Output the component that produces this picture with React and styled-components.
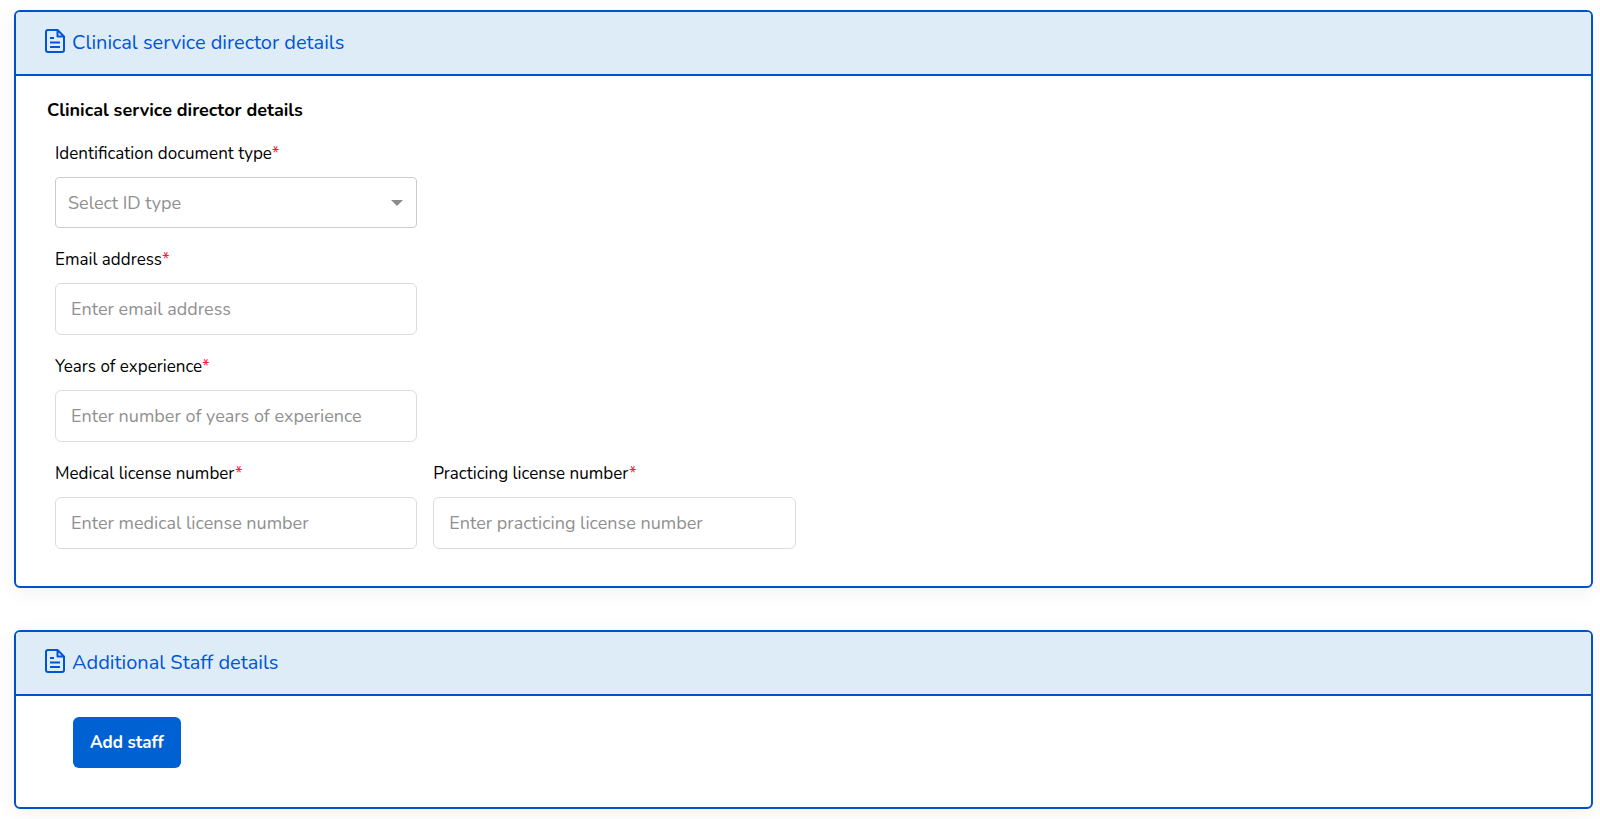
import styled, { createGlobalStyle } from "styled-components";

const GlobalStyle = createGlobalStyle`
  * {
    box-sizing: border-box;
  }

  body {
    margin: 0;
    background: #fff;
    color: #000;
    font-family: Nunito, Lato, sans-serif;
    font-size: 18px;
  }
`;

const Page = styled.main`
  display: flex;
  flex-direction: column;
  gap: 42px;
  padding: 10px 7px 10px 14px;
`;

const Card = styled.section`
  overflow: hidden;
  border: 2px solid #0052cc;
  border-radius: 6px;
  background: #fff;
  box-shadow: 0 4px 20px rgba(0, 0, 0, 0.06);
`;

const CardHeader = styled.header`
  display: flex;
  align-items: center;
  gap: 7px;
  height: 64px;
  padding: 0 29px;
  border-bottom: 2px solid #0052cc;
  background: #deecf8;
  color: #0055d4;
`;

const CardTitle = styled.h2`
  margin: 0;
  font-size: 20px;
  font-weight: 400;
  line-height: 24px;
`;

const DocumentSvg = styled.svg`
  width: 20px;
  height: 24px;
  margin-bottom: 4px;
`;

const CardBody = styled.div`
  padding: 22px 31px 37px;
`;

const StaffBody = styled.div`
  padding: 21px 57px 39px;
`;

const FormTitle = styled.h3`
  margin: 0 0 20px;
  font-size: 18px;
  font-weight: 700;
  line-height: 24px;
`;

const FormRow = styled.div`
  display: flex;
  margin-bottom: 20px;

  &:last-child {
    margin-bottom: 0;
  }
`;

const Field = styled.div`
  display: flex;
  flex: 0 0 25%;
  flex-direction: column;
  gap: 11px;
  min-width: 0;
  padding: 0 8px;
`;

const Label = styled.label`
  font-size: 17px;
  line-height: 24px;
`;

const Required = styled.span`
  color: #ff1a3c;
`;

const Input = styled.input`
  width: 100%;
  height: 52px;
  padding: 0 15px;
  border: 1px solid #d9dce1;
  border-radius: 6px;
  background: #fff;
  font: inherit;

  &::placeholder {
    color: #909090;
    opacity: 1;
  }
`;

const SelectWrap = styled.div`
  position: relative;
`;

const Select = styled.select`
  width: 100%;
  height: 51px;
  padding: 0 36px 0 12px;
  border: 1px solid #cccccc;
  border-radius: 4px;
  appearance: none;
  background: #fff;
  color: #909090;
  font: inherit;
`;

const Arrow = styled.svg`
  position: absolute;
  top: 23px;
  right: 14px;
  width: 12px;
  height: 6px;
  pointer-events: none;
`;

const AddButton = styled.button`
  height: 51px;
  padding: 0 17px;
  border: 0;
  border-radius: 6px;
  background: #0062d2;
  color: #fff;
  font: inherit;
  font-size: 17px;
  font-weight: 700;
  cursor: pointer;
`;

const DocumentIcon = () => (
  <DocumentSvg viewBox="0 0 20 24" fill="none" aria-hidden="true">
    <path
      d="M12.5 1H3a2 2 0 0 0-2 2v18a2 2 0 0 0 2 2h14a2 2 0 0 0 2-2V7.5zM12.5 1v6.5H19"
      stroke="currentColor"
      strokeWidth="2"
      strokeLinejoin="round"
    />
    <path
      d="M5 9h4M5 13.5h10M5 18h10"
      stroke="currentColor"
      strokeWidth="2"
    />
  </DocumentSvg>
);

const FieldLabel = ({ id, children }) => (
  <Label htmlFor={id}>
    {children}
    <Required>*</Required>
  </Label>
);

const TextField = ({ id, label, placeholder, type = "text" }) => (
  <Field>
    <FieldLabel id={id}>{label}</FieldLabel>
    <Input id={id} type={type} placeholder={placeholder} />
  </Field>
);

const App = () => {
  return (
    <>
      <GlobalStyle />
      <Page>
        <Card>
          <CardHeader>
            <DocumentIcon />
            <CardTitle>Clinical service director details</CardTitle>
          </CardHeader>
          <CardBody>
            <FormTitle>Clinical service director details</FormTitle>
            <FormRow>
              <Field>
                <FieldLabel id="idType">Identification document type</FieldLabel>
                <SelectWrap>
                  <Select id="idType" defaultValue="">
                    <option value="">Select ID type</option>
                  </Select>
                  <Arrow viewBox="0 0 12 6" aria-hidden="true">
                    <path d="M0 0h12L6 6z" fill="#8c8c8c" />
                  </Arrow>
                </SelectWrap>
              </Field>
            </FormRow>
            <FormRow>
              <TextField
                id="email"
                type="email"
                label="Email address"
                placeholder="Enter email address"
              />
            </FormRow>
            <FormRow>
              <TextField
                id="experience"
                label="Years of experience"
                placeholder="Enter number of years of experience"
              />
            </FormRow>
            <FormRow>
              <TextField
                id="medicalLicense"
                label="Medical license number"
                placeholder="Enter medical license number"
              />
              <TextField
                id="practicingLicense"
                label="Practicing license number"
                placeholder="Enter practicing license number"
              />
            </FormRow>
          </CardBody>
        </Card>
        <Card>
          <CardHeader>
            <DocumentIcon />
            <CardTitle>Additional Staff details</CardTitle>
          </CardHeader>
          <StaffBody>
            <AddButton type="button">Add staff</AddButton>
          </StaffBody>
        </Card>
      </Page>
    </>
  );
};

export default App;
